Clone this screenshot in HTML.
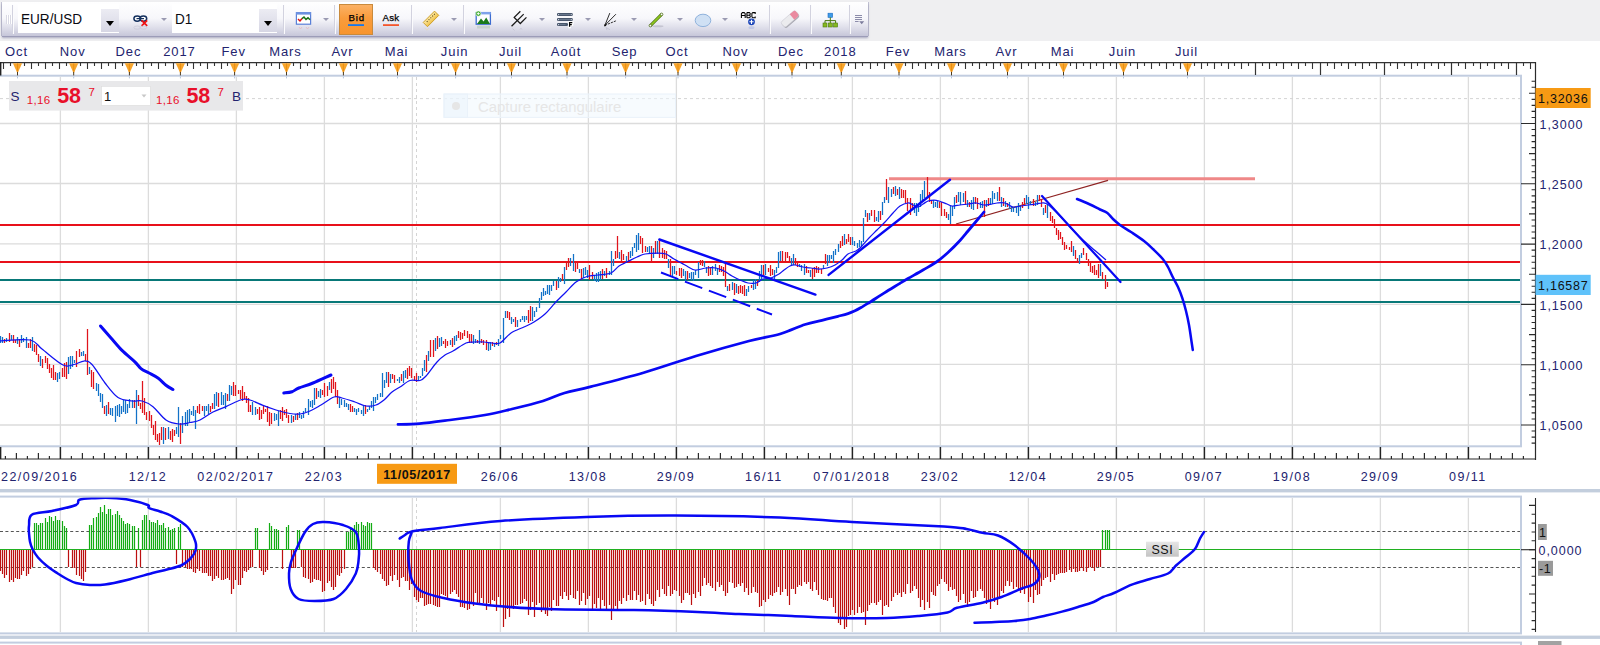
<!DOCTYPE html>
<html><head><meta charset="utf-8"><title>EUR/USD D1</title>
<style>
html,body{margin:0;padding:0;}
body{width:1600px;height:645px;overflow:hidden;background:#fff;position:relative;font-family:"Liberation Sans",sans-serif;}
#top{position:absolute;left:0;top:0;width:1600px;height:41px;background:#efeff1;}
#chart{position:absolute;left:0;top:0;width:1600px;height:645px;font-family:"Liberation Sans",sans-serif;}
#tb{position:absolute;left:2px;top:2px;width:866px;height:34px;background:linear-gradient(#ffffff 0%,#f7f7fb 48%,#dadae7 80%,#c6c6d9 100%);box-shadow:0 1px 0 #9c9cb8,0 2px 2px rgba(110,110,150,.55),-1px 0 0 #c4c4d4,1px 0 0 #c4c4d4;}
#tb .sep{position:absolute;top:3px;height:29px;width:1px;background:#d2d2df;border-right:1px solid #fbfbfd;}
#tb .combo{position:absolute;top:2px;height:29px;background:#fff;}
#tb .combo span{position:absolute;left:3.3px;top:5.6px;font-size:15px;line-height:17px;color:#0a0a12;transform:scaleX(.905);transform-origin:0 0;white-space:nowrap;}
#tb .dd{position:absolute;right:0;top:5px;width:18px;height:23px;background:linear-gradient(#ececf3,#d6d6e4);}
#tb .dd:after{content:"";position:absolute;left:4.5px;top:12px;border:4.6px solid transparent;border-top:5.4px solid #000;border-bottom:0;}
#tb .ar{position:absolute;top:16px;width:0;height:0;border:3px solid transparent;border-top:3.4px solid #9a9ab2;border-bottom:0;}
#tb svg{position:absolute;left:0;top:0;}

</style></head><body>
<div id="top"></div>

<div id="tb">
<div style="position:absolute;left:3.6px;top:12.6px;width:6px;height:9.4px;background:repeating-linear-gradient(90deg,#d9d9e4 0 1px,#ffffff 1px 2px);"></div>
<div class="sep" style="left:10px"></div>
<div class="combo" style="left:16px;width:101px"><span>EUR/USD</span><div class="dd"></div></div>
<div class="ar" style="left:158.5px"></div>
<div class="combo" style="left:170px;width:105px"><span>D1</span><div class="dd"></div></div>
<div class="sep" style="left:281px"></div>
<div class="ar" style="left:321px"></div>
<div class="sep" style="left:332px"></div>
<div style="position:absolute;left:337px;top:2px;width:31.5px;height:29px;background:linear-gradient(#fbb165,#f99c3c 45%,#f8952e);border:1px solid #c98a3c;"></div>
<div class="sep" style="left:409px"></div>
<div class="ar" style="left:449px"></div>
<div class="sep" style="left:461px"></div>
<div class="ar" style="left:536.5px"></div>
<div class="ar" style="left:582.5px"></div>
<div class="ar" style="left:628.5px"></div>
<div class="ar" style="left:674.5px"></div>
<div class="ar" style="left:720px"></div>
<div class="sep" style="left:767px"></div>
<div class="sep" style="left:808px"></div>
<div class="sep" style="left:846.5px"></div>
<svg width="866" height="34" viewBox="2 2 866 34">
<!-- link icon -->
<g fill="#fff" stroke="#14305e" stroke-width="1.5"><ellipse cx="137.2" cy="18.6" rx="3.3" ry="2.6"/><ellipse cx="143.4" cy="18.6" rx="3.3" ry="2.6"/></g><path d="M136.5 18.6h7.5" stroke="#14305e" stroke-width="1.2"/>
<path d="M141.6 20.4l5.6 5.4M147.2 20.4l-5.6 5.4" stroke="#f01010" stroke-width="1.7"/><g fill="none" stroke="#c4c4d4" stroke-width="1" opacity=".6"><ellipse cx="137.2" cy="27.6" rx="3.3" ry="1.6"/><ellipse cx="143.4" cy="27.6" rx="3.3" ry="1.6"/></g>
<!-- chart type icon -->
<rect x="296.4" y="12.6" width="14.2" height="11.6" fill="#fff" stroke="#5a80d8" stroke-width="1.2"/>
<rect x="296" y="12" width="15" height="2.6" fill="#6c90e0"/>
<path d="M298 19l2 2 2-2.4" stroke="#e01010" stroke-width="1.5" fill="none"/><path d="M302 18.6l2 -1.6 2 2.4 2-1.6 2 2" stroke="#187018" stroke-width="1.5" fill="none"/>
<path d="M299 27l1.5 2 1.5-2M306 27l1.5 2 1.5-2" stroke="#e6b0b8" stroke-width="1" fill="none" opacity=".6"/>
<!-- Bid / Ask -->
<g font-family="Liberation Sans,sans-serif" font-size="9.7" fill="#000" stroke="#000" stroke-width="0.25"><text x="348.6" y="21" letter-spacing="0.75">Bid</text><text x="382.6" y="21" letter-spacing="0.15">Ask</text></g>
<rect x="348" y="24.2" width="16" height="1.8" fill="#1478ee"/>
<rect x="383" y="24.2" width="16" height="1.8" fill="#f4562c"/>
<!-- ruler -->
<defs><linearGradient id="gr" x1="0" y1="0" x2="0" y2="1"><stop offset="0" stop-color="#fdeaa6"/><stop offset="1" stop-color="#f0c248"/></linearGradient></defs><g transform="rotate(-45 431 18.9)"><rect x="423" y="15.9" width="16" height="6" fill="url(#gr)" stroke="#cc9c28" stroke-width="0.9"/><path d="M426 18h0.9M428.6 18h0.9M431.2 18h0.9M433.8 18h0.9M436.2 18h0.9" stroke="#4a3808" stroke-width="1"/></g><path d="M424.5 27.8l2.4 2.4 2.2-2.2" stroke="#e8d4a0" stroke-width="0.9" fill="none" opacity=".6"/>
<!-- image icon -->
<rect x="476.2" y="12.6" width="14.2" height="11.6" fill="#fdfdff" stroke="#3c6cd0" stroke-width="1.3"/>
<rect x="476" y="12" width="14.8" height="2.4" fill="#7ea2ea"/>
<path d="M477 24l4-5.5 2.6 3 2.6-4 3.8 6.5z" fill="#1a7a1a"/>
<circle cx="478.3" cy="13.6" r="2.7" fill="#3aa828" stroke="#fff" stroke-width="0.6"/><path d="M476.8 13.6h3M478.3 12.1v3" stroke="#fff" stroke-width="0.9"/>
<rect x="477" y="25.5" width="13" height="3" fill="#9ab89a" opacity=".35"/>
<!-- pitchfork -->
<g stroke="#1a1a1a" stroke-width="1.25" fill="none" stroke-linecap="square"><path d="M512 25.8L523.2 14.6M514.2 17.4L520.3 23.5M514.2 17.4L519.9 11.7M520.3 23.5L526 17.8"/></g>
<path d="M512.5 28.5l2 2M520 29.5l1-1.2 1 1.2" stroke="#b8b8c8" stroke-width="0.8" fill="none" opacity=".7"/>
<!-- fib levels -->
<g fill="#48566c"><rect x="557" y="13" width="15.8" height="3.1" rx="1.3"/><rect x="557" y="18" width="15.8" height="3.1" rx="1.3"/><rect x="557" y="23" width="11" height="3.1" rx="1.3"/></g>
<g stroke="#8e9cb4" stroke-width="0.5"><path d="M559.5 14.55h10.8M559.5 19.55h10.8M559.5 24.55h6"/></g><g fill="#e8ecf4"><circle cx="558.6" cy="14.55" r=".6"/><circle cx="571.2" cy="14.55" r=".6"/><circle cx="558.6" cy="19.55" r=".6"/><circle cx="571.2" cy="19.55" r=".6"/><circle cx="558.6" cy="24.55" r=".6"/></g>
<path d="M569.6 26.8V22.7H572.3M569.6 24.7H571.8" stroke="#fff" stroke-width="2.8" fill="none" stroke-linecap="square"/><path d="M569.6 26.8V22.7H572.3M569.6 24.7H571.8" stroke="#000" stroke-width="1.25" fill="none"/>
<!-- fan -->
<g stroke="#222" stroke-width="0.95" fill="none"><path d="M604.9 25.3L609.8 13.1M604.9 25.3L615.9 14.2"/><path d="M604.9 25.3L616.8 20.5" stroke-dasharray="2.2 1"/></g><path d="M606 27.5l4 2.2M606 27.5l1 2.6" stroke="#b0b0c0" stroke-width="0.8" opacity=".6"/>
<path d="M604 24.5l2.4 .4-1.6 1.8z" fill="#000"/>
<!-- green line -->
<path d="M650.4 25.6L661.6 14.4" stroke="#4e7210" stroke-width="3"/><path d="M650.4 25.6L661.6 14.4" stroke="#8ec820" stroke-width="1.7"/><circle cx="650.4" cy="25.6" r="1.3" fill="#fff" stroke="#4a6a10" stroke-width="0.8"/><circle cx="661.6" cy="14.4" r="1.3" fill="#fff" stroke="#4a6a10" stroke-width="0.8"/><ellipse cx="658" cy="26.2" rx="5.5" ry="1" fill="#a8a8b8" opacity=".5"/>
<!-- ellipse -->
<ellipse cx="703" cy="20.4" rx="7.8" ry="6.2" fill="#cfe0f4" stroke="#8fb2dc" stroke-width="1"/>
<!-- ABC -->
<path d="M741.4 17.9V13.6L742.4 12.6H744.2L745.2 13.6V17.9M741.4 15.5H745.2M746.9 12.6V17.8M746.9 12.6H749.4L750.2 13.4V14.4L749.4 15.2H746.9M749.4 15.2L750.2 16V17L749.4 17.8H746.9M755.2 14V12.6H752.8L751.9 13.5V16.9L752.8 17.8H755.2V16.6" stroke="#000" stroke-width="1.05" fill="none"/>
<circle cx="751.5" cy="21.8" r="3.4" fill="#1a44b8"/><path d="M749.4 21.8h4.2M751.5 19.7v4.2" stroke="#fff" stroke-width="1.1"/><ellipse cx="751.5" cy="27.6" rx="3" ry="1.5" fill="#8ea4e0" opacity=".35"/>
<!-- eraser -->
<g transform="rotate(-41 790 19.2)"><rect x="780.6" y="16.6" width="19" height="7" rx="2.2" fill="#a9a9b2"/><rect x="780.6" y="15.4" width="19" height="7" rx="2.2" fill="#ebebee" stroke="#c4c4cc" stroke-width="0.5"/><path d="M793 15.4h4.4a2.2 2.2 0 0 1 2.2 2.2v2.6a2.2 2.2 0 0 1-2.2 2.2H793z" fill="#ea8aa0"/></g>
<!-- org chart -->
<rect x="828" y="13.2" width="4.6" height="4.2" fill="#3e9ae8" stroke="#1c6cc0" stroke-width="0.6"/>
<path d="M830.3 17.4v3.2M825 23v-2.4h10.6V23M830.3 20.6V23" stroke="#4a7a10" stroke-width="1" fill="none"/>
<g fill="#86b820" stroke="#4a7a10" stroke-width="0.6"><rect x="823" y="23" width="4" height="4"/><rect x="828.3" y="23" width="4" height="4"/><rect x="833.6" y="23" width="4" height="4"/></g>
<!-- overflow -->
<path d="M855 15.5h7M855 17.5h7M855 19.5h7M855 21.5h3.6" stroke="#8c8caa" stroke-width="1"/><path d="M859.2 21.2h5l-2.5 3.1z" fill="#7c7c9c"/>
</svg>
</div>

<svg id="chart" width="1600" height="645" viewBox="0 0 1600 645">
<g stroke="#dcdcdc" stroke-width="1.3" fill="none">
<path d="M60.4 77V445M148.4 77V445M236.4 77V445M324.4 77V445M412.4 77V445M500.4 77V445M588.4 77V445M676.4 77V445M764.4 77V445M852.4 77V445M940.4 77V445M1028.4 77V445M1116.4 77V445M1204.4 77V445M1292.4 77V445M1380.4 77V445M1468.4 77V445M0 123.5H1520M0 183.5H1520M0 243.8H1520M0 304.3H1520M0 364.4H1520M0 425H1520M60.4 498V632M148.4 498V632M236.4 498V632M324.4 498V632M412.4 498V632M500.4 498V632M588.4 498V632M676.4 498V632M764.4 498V632M852.4 498V632M940.4 498V632M1028.4 498V632M1116.4 498V632M1204.4 498V632M1292.4 498V632M1380.4 498V632M1468.4 498V632"/>
</g>
<path d="M0 98.6H1520" stroke="#d4d4d4" stroke-width="1" stroke-dasharray="3 3" fill="none"/>
<path d="M416.5 77V445M416.5 498V632" stroke="#d4d4d4" stroke-width="1" stroke-dasharray="3 3" fill="none"/>
<rect x="444" y="94" width="231.5" height="23.4" fill="#f0f7fd" fill-opacity=".55" stroke="#eaf2fa" stroke-width="1"/>
<rect x="444" y="94" width="23.5" height="23.4" fill="#eaf3fc" fill-opacity=".5" stroke="#eaf2fa" stroke-width="1"/>
<circle cx="456" cy="106" r="4" fill="#e6e6e6"/>
<text x="478" y="111.5" font-size="14.9" fill="#e6e6e6">Capture rectangulaire</text>
<path d="M0 225H1520M0 262H1520" stroke="#e8101a" stroke-width="2" fill="none"/>
<path d="M0 280H1520M0 302H1520" stroke="#087878" stroke-width="2.2" fill="none"/>
<path d="M889 178.7H1255" stroke="#ef8888" stroke-width="3" fill="none"/>
<path d="M956 224L1108 180.3" stroke="#8e2222" stroke-width="1.2" fill="none"/>
<path d="M4.5 339V343M9.5 333V342M13.5 335V343M15.5 340V343M19.5 339V347M28.5 343V348M30.5 339V348M34.5 344V352M36.5 345V355M38.5 354V362M42.5 359V368M45.5 356V363M47.5 358V369M49.5 364V373M51.5 368V378M53.5 365V380M55.5 372V380M62.5 368V377M64.5 363V377M66.5 362V379M76.5 351V367M79.5 349V357M85.5 354V361M87.5 329V375M91.5 370V387M93.5 372V389M104.5 406V414M108.5 402V414M134.5 400V408M138.5 395V406M140.5 403V409M142.5 381V413M144.5 398V415M146.5 412V420M149.5 411V421M151.5 415V428M153.5 425V435M155.5 421V440M157.5 434V442M159.5 433V445M161.5 427V440M165.5 428V440M170.5 431V440M172.5 429V442M174.5 430V436M180.5 423V444M197.5 406V413M199.5 404V414M202.5 406V411M210.5 406V412M212.5 403V409M218.5 393V407M227.5 394V401M233.5 382V396M235.5 385V396M238.5 390V394M240.5 390V399M242.5 386V401M244.5 392V399M246.5 396V403M248.5 398V412M250.5 405V412M257.5 409V414M259.5 407V420M261.5 410V419M263.5 406V414M265.5 409V412M267.5 406V422M269.5 412V426M271.5 413V424M280.5 410V419M282.5 407V421M284.5 410V415M286.5 409V418M288.5 415V423M293.5 416V422M297.5 413V420M316.5 388V399M322.5 390V395M324.5 383V397M327.5 386V396M331.5 379V393M333.5 377V389M335.5 382V397M337.5 390V404M350.5 404V412M352.5 406V412M365.5 405V414M388.5 372V387M392.5 374V379M394.5 375V383M401.5 374V381M407.5 368V379M409.5 366V376M411.5 368V378M414.5 376V381M416.5 373V382M426.5 355V372M430.5 340V357M433.5 340V357M437.5 336V349M443.5 341V344M445.5 339V348M447.5 341V346M452.5 338V347M458.5 331V338M460.5 332V340M462.5 333V339M464.5 330V336M467.5 331V338M469.5 334V343M471.5 334V343M477.5 340V343M481.5 339V343M483.5 340V345M486.5 340V350M492.5 342V346M496.5 342V345M507.5 311V318M509.5 312V320M515.5 317V327M528.5 310V323M530.5 306V321M556.5 281V290M562.5 274V281M566.5 261V270M568.5 258V267M575.5 261V272M577.5 261V269M581.5 269V280M589.5 265V280M592.5 272V279M602.5 269V279M606.5 268V278M615.5 251V259M617.5 236V258M621.5 250V263M623.5 254V260M628.5 252V261M640.5 236V244M642.5 238V253M645.5 246V252M651.5 246V263M655.5 241V254M659.5 240V258M662.5 248V258M664.5 250V259M666.5 251V259M670.5 259V276M676.5 271V275M679.5 268V276M681.5 268V278M687.5 271V280M700.5 260V265M702.5 260V266M708.5 266V276M710.5 267V275M719.5 265V272M721.5 266V272M723.5 267V276M725.5 263V287M729.5 284V291M734.5 283V295M738.5 286V294M740.5 285V293M742.5 286V294M744.5 285V296M751.5 285V288M757.5 280V286M763.5 265V275M768.5 268V272M770.5 265V276M772.5 269V275M782.5 251V262M785.5 252V263M787.5 252V258M789.5 256V262M795.5 258V265M797.5 263V267M806.5 266V273M808.5 270V273M812.5 268V279M814.5 267V277M816.5 266V273M818.5 267V273M821.5 269V274M825.5 254V264M840.5 241V248M842.5 236V246M846.5 239V244M848.5 234V242M850.5 237V245M867.5 213V222M871.5 210V216M874.5 210V222M880.5 211V220M886.5 179V200M893.5 187V194M897.5 189V195M901.5 189V198M903.5 190V198M905.5 190V203M907.5 198V211M910.5 198V215M912.5 203V210M927.5 177V198M929.5 192V202M931.5 200V204M939.5 202V208M941.5 202V216M944.5 209V216M946.5 212V218M956.5 195V203M965.5 191V205M969.5 202V207M975.5 197V204M977.5 198V209M984.5 200V217M988.5 198V206M999.5 187V201M1003.5 198V206M1007.5 203V207M1022.5 202V208M1024.5 198V206M1033.5 199V206M1039.5 195V201M1041.5 199V207M1045.5 205V213M1050.5 212V221M1052.5 216V223M1054.5 219V228M1056.5 228V235M1058.5 230V240M1060.5 232V239M1062.5 237V245M1064.5 242V250M1066.5 245V249M1069.5 247V250M1071.5 241V252M1075.5 250V259M1077.5 258V262M1083.5 248V255M1086.5 253V260M1088.5 259V266M1090.5 262V272M1092.5 266V273M1094.5 265V275M1096.5 270V275M1098.5 264V278M1102.5 272V279M1105.5 275V289M1107.5 282V287" stroke="#e0141c" stroke-width="1.25" fill="none"/>
<path d="M0.5 336V343M2.5 337V343M6.5 338V342M11.5 335V340M17.5 337V344M21.5 335V343M23.5 338V342M26.5 337V348M32.5 337V351M40.5 356V366M57.5 373V382M59.5 372V379M68.5 357V374M70.5 356V369M72.5 356V367M74.5 360V363M81.5 352V356M83.5 351V356M89.5 367V374M96.5 383V391M98.5 384V396M100.5 393V402M102.5 394V408M106.5 405V416M110.5 408V415M112.5 408V416M115.5 406V422M117.5 405V416M119.5 404V417M121.5 406V414M123.5 400V412M125.5 400V414M127.5 404V413M129.5 399V408M132.5 400V408M136.5 390V424M163.5 427V444M168.5 427V439M176.5 427V434M178.5 407V437M182.5 416V433M185.5 412V426M187.5 410V426M189.5 409V423M191.5 411V415M193.5 406V416M195.5 410V429M204.5 406V416M206.5 406V411M208.5 404V414M214.5 394V409M216.5 392V406M221.5 392V405M223.5 395V405M225.5 393V409M229.5 385V401M231.5 386V395M252.5 402V415M255.5 407V415M274.5 413V421M276.5 414V420M278.5 411V426M291.5 415V423M295.5 414V420M299.5 412V418M301.5 415V419M303.5 411V418M305.5 408V412M308.5 399V415M310.5 401V407M312.5 400V408M314.5 388V405M318.5 391V397M320.5 389V398M329.5 382V390M339.5 397V408M341.5 399V405M344.5 400V407M346.5 403V407M348.5 404V410M354.5 408V412M356.5 409V415M358.5 408V412M361.5 410V414M363.5 406V416M367.5 409V412M369.5 406V410M371.5 401V408M373.5 397V411M375.5 397V403M377.5 394V400M380.5 393V397M382.5 373V397M384.5 380V388M386.5 372V383M390.5 374V383M397.5 379V381M399.5 377V383M403.5 371V383M405.5 370V378M418.5 376V380M420.5 376V378M422.5 368V376M424.5 360V371M428.5 351V361M435.5 338V351M439.5 338V347M441.5 337V346M450.5 340V345M454.5 336V345M456.5 335V341M473.5 335V344M475.5 339V343M479.5 330V344M488.5 343V351M490.5 342V350M494.5 343V347M498.5 339V346M500.5 335V339M503.5 318V343M505.5 311V318M511.5 317V324M513.5 319V322M517.5 320V327M520.5 319V322M522.5 316V320M524.5 316V322M526.5 316V320M532.5 307V321M534.5 311V317M536.5 307V312M539.5 298V308M541.5 292V300M543.5 288V296M545.5 291V295M547.5 285V294M549.5 285V295M551.5 285V291M553.5 281V286M558.5 277V288M560.5 278V282M564.5 267V284M570.5 258V266M573.5 254V271M579.5 269V273M583.5 268V278M585.5 267V275M587.5 270V278M594.5 275V281M596.5 273V282M598.5 272V282M600.5 271V280M604.5 271V276M609.5 271V275M611.5 251V275M613.5 259V266M619.5 252V259M626.5 256V262M630.5 251V258M632.5 247V256M634.5 243V248M636.5 235V252M638.5 233V250M647.5 247V252M649.5 246V254M653.5 248V258M657.5 241V254M668.5 259V268M672.5 266V276M674.5 266V274M683.5 269V276M685.5 271V281M689.5 273V278M691.5 272V280M693.5 272V281M695.5 270V275M698.5 262V278M704.5 261V267M706.5 267V273M712.5 266V275M715.5 264V271M717.5 268V275M727.5 286V291M732.5 282V290M736.5 284V293M746.5 289V296M748.5 286V292M753.5 280V290M755.5 279V289M759.5 271V282M761.5 265V280M765.5 264V275M774.5 270V279M776.5 267V273M778.5 252V268M780.5 251V261M791.5 258V265M793.5 254V265M799.5 264V267M801.5 265V271M804.5 264V275M810.5 270V277M823.5 265V269M827.5 255V266M829.5 255V263M831.5 255V259M833.5 251V263M835.5 249V255M838.5 244V252M844.5 234V245M852.5 237V245M854.5 241V246M857.5 243V248M859.5 240V247M861.5 241V246M863.5 218V242M865.5 210V217M869.5 213V220M876.5 217V221M878.5 211V222M882.5 202V215M884.5 197V203M888.5 187V203M891.5 189V197M895.5 186V196M899.5 187V199M914.5 203V213M916.5 203V216M918.5 204V212M920.5 194V207M922.5 190V201M924.5 181V198M933.5 200V208M935.5 202V207M937.5 201V208M948.5 214V220M950.5 205V224M952.5 206V216M954.5 197V209M958.5 192V202M960.5 192V205M963.5 193V202M967.5 200V207M971.5 200V209M973.5 197V210M980.5 202V208M982.5 201V208M986.5 200V207M990.5 198V205M992.5 191V204M994.5 193V199M997.5 192V201M1001.5 197V207M1005.5 201V207M1009.5 202V209M1011.5 206V212M1013.5 207V212M1016.5 206V213M1018.5 203V216M1020.5 206V211M1026.5 195V204M1028.5 197V209M1030.5 201V205M1035.5 202V206M1037.5 195V205M1043.5 208V215M1047.5 204V218M1073.5 246V256M1079.5 255V264M1081.5 253V258M1100.5 264V276" stroke="#1272c8" stroke-width="1.25" fill="none"/>
<path d="M0 340.8C5 340.7 23 338.6 30 340C37 341.4 36.5 344.8 42 349C47.5 353.2 57.7 362.4 63 365C68.3 367.6 70.5 365.2 74 364.5C77.5 363.8 81 361 84 361C87 361 88.5 360.8 92 364.5C95.5 368.2 100.7 377.5 105 383C109.3 388.5 113.5 394.5 118 397.5C122.5 400.5 128 400.4 132 401C136 401.6 138.5 400.1 142 401C145.5 401.9 149 403.5 153 406.7C157 409.9 161.7 417.1 166 420C170.3 422.9 175 423.6 179 424C183 424.4 186.5 423.2 190 422.5C193.5 421.8 196.2 421.8 200 420C203.8 418.2 208.7 414.2 213 412C217.3 409.8 221.2 408.7 226 406.6C230.8 404.5 238 400.6 242 399.5C246 398.4 246.5 399 250 400C253.5 401 258.7 403.7 263 405.4C267.3 407.1 271.5 408.6 276 410C280.5 411.4 286 412.8 290 413.5C294 414.2 296.7 414.4 300 414C303.3 413.6 306.5 412.5 310 411C313.5 409.5 317 407.3 321 405C325 402.7 330.5 398.2 334 397C337.5 395.8 338.5 397.2 342 398C345.5 398.8 351 400.7 355 402C359 403.3 362.5 405.5 366 406C369.5 406.5 373 406 376 405C379 404 381.3 402.2 384 400C386.7 397.8 389.3 394.2 392 392C394.7 389.8 397 388.9 400 387C403 385.1 406.7 381.6 410 380.5C413.3 379.4 417.3 381.2 420 380.5C422.7 379.8 423.2 379.1 426 376C428.8 372.9 433.8 365.5 437 362C440.2 358.5 442.3 356.8 445 355C447.7 353.2 449.5 353 453 351C456.5 349 462.5 344.5 466 343C469.5 341.5 471 342.2 474 342C477 341.8 481 341.8 484 342C487 342.2 489.3 342.8 492 343C494.7 343.2 496.8 344.7 500 343C503.2 341.3 507 335.7 511 333C515 330.3 520.2 328.8 524 327C527.8 325.2 530.5 324.2 534 322C537.5 319.8 541.5 317.2 545 314C548.5 310.8 551.5 306.7 555 303C558.5 299.3 562.5 295.5 566 292C569.5 288.5 572.5 284.6 576 282C579.5 279.4 583.3 277.7 587 276.5C590.7 275.3 594 275.6 598 275C602 274.4 607.5 274.5 611 273C614.5 271.5 616.3 267.8 619 266C621.7 264.2 624 263.5 627 262C630 260.5 634 258.3 637 257C640 255.7 641.5 254.7 645 254C648.5 253.3 654.5 253 658 253C661.5 253 663.3 253 666 254C668.7 255 670.8 257.2 674 259C677.2 260.8 681.5 263.2 685 265C688.5 266.8 691.5 269.5 695 270C698.5 270.5 702.5 268.3 706 268C709.5 267.7 713 267.5 716 268C719 268.5 721.3 269.7 724 271C726.7 272.3 729.3 274.5 732 276C734.7 277.5 737.3 278.8 740 280C742.7 281.2 745.3 282.5 748 283C750.7 283.5 753.5 283.7 756 283C758.5 282.3 760.5 279.8 763 279C765.5 278.2 768.3 278.8 771 278C773.7 277.2 776.8 275.3 779 274C781.2 272.7 782.2 271.3 784 270C785.8 268.7 788.2 266.8 790 266C791.8 265.2 792.8 264.8 795 265C797.2 265.2 800.3 266.5 803 267C805.7 267.5 808.3 267.7 811 268C813.7 268.3 816.3 269 819 269C821.7 269 824.3 268.7 827 268C829.7 267.3 832.5 266.3 835 265C837.5 263.7 839.8 261.8 842 260C844.2 258.2 845.7 255.5 848 254C850.3 252.5 853.8 252.2 856 251C858.2 249.8 858.8 249.2 861 247C863.2 244.8 866.3 240.8 869 238C871.7 235.2 874.3 232.7 877 230C879.7 227.3 882.3 224.8 885 222C887.7 219.2 890.5 215.7 893 213C895.5 210.3 897.5 207.7 900 206C902.5 204.3 905.8 203.2 908 203C910.2 202.8 911.3 204.3 913 205C914.7 205.7 916.3 207.2 918 207C919.7 206.8 921.3 205 923 204C924.7 203 926.2 201.7 928 201C929.8 200.3 932.2 200 934 200C935.8 200 936.8 200.3 939 201C941.2 201.7 944.8 203.2 947 204C949.2 204.8 949.8 205.8 952 206C954.2 206.2 957.3 205.3 960 205C962.7 204.7 965.3 204.3 968 204C970.7 203.7 973.3 202.8 976 203C978.7 203.2 981.3 204.8 984 205C986.7 205.2 989.8 204.3 992 204C994.2 203.7 994.8 203.2 997 203C999.2 202.8 1002.3 202.3 1005 203C1007.7 203.7 1010.3 206.5 1013 207C1015.7 207.5 1018.5 206.3 1021 206C1023.5 205.7 1025.5 205.3 1028 205C1030.5 204.7 1033.7 204.3 1036 204C1038.3 203.7 1040.3 203.1 1042 203C1043.7 202.9 1044.3 202.7 1046 203.5C1047.7 204.3 1049.7 205.9 1052 208C1054.3 210.1 1057 212.8 1060 216C1063 219.2 1066.2 223 1070 227C1073.8 231 1078.8 236.1 1083 240C1087.2 243.9 1091.2 247.2 1095 250.5C1098.8 253.8 1104.2 258.4 1106 260" stroke="#1212f2" stroke-width="1.25" fill="none"/>
<path d="M0 531.5H1520M0 567.5H1520" stroke="#555" stroke-width="1" stroke-dasharray="3 2.4" fill="none"/>
<path d="M0.5 549.5V571M2.5 549.5V574M4.5 549.5V578M6.5 549.5V575M9.5 549.5V582M11.5 549.5V580M13.5 549.5V582M15.5 549.5V578M17.5 549.5V579M19.5 549.5V579M21.5 549.5V575M23.5 549.5V571M26.5 549.5V576M28.5 549.5V574M30.5 549.5V569M32.5 549.5V567M68.5 549.5V567M72.5 549.5V568M74.5 549.5V568M76.5 549.5V575M79.5 549.5V576M81.5 549.5V579M83.5 549.5V581M85.5 549.5V572M136.5 549.5V567M140.5 549.5V567M176.5 549.5V564M182.5 549.5V567M185.5 549.5V567M187.5 549.5V569M189.5 549.5V569M191.5 549.5V569M193.5 549.5V572M195.5 549.5V573M197.5 549.5V569M199.5 549.5V571M202.5 549.5V573M204.5 549.5V573M206.5 549.5V573M208.5 549.5V576M210.5 549.5V576M212.5 549.5V581M214.5 549.5V579M216.5 549.5V576M218.5 549.5V578M221.5 549.5V580M223.5 549.5V580M225.5 549.5V579M227.5 549.5V578M229.5 549.5V580M231.5 549.5V594M233.5 549.5V589M235.5 549.5V580M238.5 549.5V585M240.5 549.5V585M242.5 549.5V578M244.5 549.5V571M246.5 549.5V572M248.5 549.5V570M250.5 549.5V567M252.5 549.5V567M259.5 549.5V568M261.5 549.5V571M263.5 549.5V575M265.5 549.5V572M267.5 549.5V570M282.5 549.5V569M291.5 549.5V568M293.5 549.5V568M295.5 549.5V568M301.5 549.5V567M303.5 549.5V577M305.5 549.5V578M308.5 549.5V579M310.5 549.5V583M312.5 549.5V582M314.5 549.5V579M316.5 549.5V580M318.5 549.5V580M320.5 549.5V581M322.5 549.5V592M324.5 549.5V591M327.5 549.5V583M329.5 549.5V581M331.5 549.5V587M333.5 549.5V590M335.5 549.5V587M337.5 549.5V575M339.5 549.5V576M341.5 549.5V573M344.5 549.5V569M373.5 549.5V568M375.5 549.5V570M377.5 549.5V572M380.5 549.5V574M382.5 549.5V579M384.5 549.5V581M386.5 549.5V586M388.5 549.5V585M390.5 549.5V576M392.5 549.5V581M394.5 549.5V575M397.5 549.5V580M399.5 549.5V587M401.5 549.5V578M403.5 549.5V577M405.5 549.5V581M407.5 549.5V581M409.5 549.5V590M411.5 549.5V584M414.5 549.5V597M416.5 549.5V600M418.5 549.5V602M420.5 549.5V598M422.5 549.5V598M424.5 549.5V606M426.5 549.5V605M428.5 549.5V604M430.5 549.5V604M433.5 549.5V605M435.5 549.5V606M437.5 549.5V607M439.5 549.5V607M441.5 549.5V594M443.5 549.5V595M445.5 549.5V596M447.5 549.5V598M450.5 549.5V594M452.5 549.5V592M454.5 549.5V590M456.5 549.5V594M458.5 549.5V597M460.5 549.5V607M462.5 549.5V607M464.5 549.5V608M467.5 549.5V610M469.5 549.5V609M471.5 549.5V603M473.5 549.5V606M475.5 549.5V593M477.5 549.5V604M479.5 549.5V603M481.5 549.5V598M483.5 549.5V603M486.5 549.5V610M488.5 549.5V603M490.5 549.5V606M492.5 549.5V600M494.5 549.5V601M496.5 549.5V611M498.5 549.5V597M500.5 549.5V605M503.5 549.5V627M505.5 549.5V619M507.5 549.5V609M509.5 549.5V617M511.5 549.5V607M513.5 549.5V609M515.5 549.5V605M517.5 549.5V605M520.5 549.5V604M522.5 549.5V603M524.5 549.5V599M526.5 549.5V601M528.5 549.5V615M530.5 549.5V610M532.5 549.5V602M534.5 549.5V617M536.5 549.5V605M539.5 549.5V603M541.5 549.5V612M543.5 549.5V608M545.5 549.5V614M547.5 549.5V616M549.5 549.5V607M551.5 549.5V611M553.5 549.5V600M556.5 549.5V606M558.5 549.5V606M560.5 549.5V596M562.5 549.5V599M564.5 549.5V592M566.5 549.5V596M568.5 549.5V600M570.5 549.5V595M573.5 549.5V598M575.5 549.5V599M577.5 549.5V591M579.5 549.5V605M581.5 549.5V601M583.5 549.5V593M585.5 549.5V605M587.5 549.5V599M589.5 549.5V596M592.5 549.5V610M594.5 549.5V604M596.5 549.5V608M598.5 549.5V598M600.5 549.5V611M602.5 549.5V600M604.5 549.5V606M606.5 549.5V611M609.5 549.5V605M611.5 549.5V620M613.5 549.5V609M615.5 549.5V606M617.5 549.5V610M619.5 549.5V601M621.5 549.5V604M623.5 549.5V598M626.5 549.5V601M628.5 549.5V595M630.5 549.5V600M632.5 549.5V600M634.5 549.5V591M636.5 549.5V600M638.5 549.5V595M640.5 549.5V602M642.5 549.5V601M645.5 549.5V605M647.5 549.5V594M649.5 549.5V599M651.5 549.5V604M653.5 549.5V606M655.5 549.5V601M657.5 549.5V590M659.5 549.5V597M662.5 549.5V589M664.5 549.5V594M666.5 549.5V596M668.5 549.5V586M670.5 549.5V596M672.5 549.5V594M674.5 549.5V590M676.5 549.5V591M679.5 549.5V596M681.5 549.5V603M683.5 549.5V600M685.5 549.5V593M687.5 549.5V593M689.5 549.5V595M691.5 549.5V605M693.5 549.5V594M695.5 549.5V598M698.5 549.5V592M700.5 549.5V596M702.5 549.5V586M704.5 549.5V578M706.5 549.5V585M708.5 549.5V583M710.5 549.5V586M712.5 549.5V588M715.5 549.5V591M717.5 549.5V582M719.5 549.5V587M721.5 549.5V585M723.5 549.5V591M725.5 549.5V596M727.5 549.5V593M729.5 549.5V582M732.5 549.5V583M734.5 549.5V588M736.5 549.5V587M738.5 549.5V584M740.5 549.5V586M742.5 549.5V583M744.5 549.5V592M746.5 549.5V588M748.5 549.5V595M751.5 549.5V593M753.5 549.5V587M755.5 549.5V592M757.5 549.5V593M759.5 549.5V607M761.5 549.5V606M763.5 549.5V600M765.5 549.5V602M768.5 549.5V599M770.5 549.5V595M772.5 549.5V596M774.5 549.5V593M776.5 549.5V592M778.5 549.5V587M780.5 549.5V595M782.5 549.5V592M785.5 549.5V589M787.5 549.5V596M789.5 549.5V605M791.5 549.5V589M793.5 549.5V589M795.5 549.5V594M797.5 549.5V587M799.5 549.5V585M801.5 549.5V586M804.5 549.5V582M806.5 549.5V584M808.5 549.5V582M810.5 549.5V589M812.5 549.5V591M814.5 549.5V582M816.5 549.5V590M818.5 549.5V595M821.5 549.5V599M823.5 549.5V600M825.5 549.5V600M827.5 549.5V601M829.5 549.5V598M831.5 549.5V598M833.5 549.5V607M835.5 549.5V613M838.5 549.5V623M840.5 549.5V625M842.5 549.5V617M844.5 549.5V629M846.5 549.5V627M848.5 549.5V616M850.5 549.5V615M852.5 549.5V610M854.5 549.5V615M857.5 549.5V613M859.5 549.5V607M861.5 549.5V613M863.5 549.5V612M865.5 549.5V625M867.5 549.5V611M869.5 549.5V605M871.5 549.5V603M874.5 549.5V603M876.5 549.5V605M878.5 549.5V602M880.5 549.5V600M882.5 549.5V615M884.5 549.5V606M886.5 549.5V605M888.5 549.5V607M891.5 549.5V601M893.5 549.5V597M895.5 549.5V593M897.5 549.5V595M899.5 549.5V593M901.5 549.5V597M903.5 549.5V592M905.5 549.5V594M907.5 549.5V584M910.5 549.5V593M912.5 549.5V591M914.5 549.5V586M916.5 549.5V589M918.5 549.5V598M920.5 549.5V607M922.5 549.5V600M924.5 549.5V610M927.5 549.5V602M929.5 549.5V608M931.5 549.5V592M933.5 549.5V595M935.5 549.5V596M937.5 549.5V586M939.5 549.5V584M941.5 549.5V579M944.5 549.5V582M946.5 549.5V584M948.5 549.5V591M950.5 549.5V587M952.5 549.5V590M954.5 549.5V589M956.5 549.5V596M958.5 549.5V602M960.5 549.5V600M963.5 549.5V594M965.5 549.5V603M967.5 549.5V607M969.5 549.5V602M971.5 549.5V591M973.5 549.5V598M975.5 549.5V597M977.5 549.5V591M980.5 549.5V589M982.5 549.5V591M984.5 549.5V598M986.5 549.5V604M988.5 549.5V602M990.5 549.5V609M992.5 549.5V598M994.5 549.5V602M997.5 549.5V605M999.5 549.5V598M1001.5 549.5V591M1003.5 549.5V593M1005.5 549.5V586M1007.5 549.5V581M1009.5 549.5V586M1011.5 549.5V582M1013.5 549.5V589M1016.5 549.5V587M1018.5 549.5V590M1020.5 549.5V593M1022.5 549.5V590M1024.5 549.5V594M1026.5 549.5V588M1028.5 549.5V602M1030.5 549.5V597M1033.5 549.5V603M1035.5 549.5V590M1037.5 549.5V595M1039.5 549.5V594M1041.5 549.5V586M1043.5 549.5V580M1045.5 549.5V578M1047.5 549.5V577M1050.5 549.5V582M1052.5 549.5V574M1054.5 549.5V580M1056.5 549.5V575M1058.5 549.5V574M1060.5 549.5V573M1062.5 549.5V573M1064.5 549.5V573M1066.5 549.5V572M1069.5 549.5V570M1071.5 549.5V572M1073.5 549.5V569M1075.5 549.5V572M1077.5 549.5V572M1079.5 549.5V571M1081.5 549.5V568M1083.5 549.5V571M1086.5 549.5V572M1088.5 549.5V568M1090.5 549.5V567M1092.5 549.5V568M1094.5 549.5V571M1096.5 549.5V567M1098.5 549.5V567M1100.5 549.5V567" stroke="#bc1010" stroke-width="1.2" fill="none"/>
<path d="M34.5 549.5V523M36.5 549.5V523M38.5 549.5V525M40.5 549.5V523M42.5 549.5V523M45.5 549.5V518M47.5 549.5V522M49.5 549.5V516M51.5 549.5V517M53.5 549.5V521M55.5 549.5V516M57.5 549.5V520M59.5 549.5V520M62.5 549.5V521M64.5 549.5V526M66.5 549.5V528M89.5 549.5V525M91.5 549.5V525M93.5 549.5V518M96.5 549.5V517M98.5 549.5V513M100.5 549.5V507M102.5 549.5V512M104.5 549.5V505M106.5 549.5V514M108.5 549.5V509M110.5 549.5V509M112.5 549.5V515M115.5 549.5V514M117.5 549.5V511M119.5 549.5V515M121.5 549.5V518M123.5 549.5V521M125.5 549.5V524M127.5 549.5V523M129.5 549.5V524M132.5 549.5V526M134.5 549.5V526M138.5 549.5V528M142.5 549.5V520M144.5 549.5V515M146.5 549.5V515M149.5 549.5V520M151.5 549.5V522M153.5 549.5V522M155.5 549.5V523M157.5 549.5V520M159.5 549.5V525M161.5 549.5V525M163.5 549.5V523M165.5 549.5V528M168.5 549.5V527M170.5 549.5V530M172.5 549.5V529M174.5 549.5V528M178.5 549.5V527M180.5 549.5V524M255.5 549.5V528M257.5 549.5V528M269.5 549.5V523M271.5 549.5V526M274.5 549.5V529M276.5 549.5V529M278.5 549.5V530M286.5 549.5V527M288.5 549.5V525M297.5 549.5V530M299.5 549.5V530M346.5 549.5V532M348.5 549.5V532M350.5 549.5V528M352.5 549.5V529M354.5 549.5V525M356.5 549.5V522M358.5 549.5V524M361.5 549.5V522M363.5 549.5V525M365.5 549.5V526M367.5 549.5V522M369.5 549.5V523M371.5 549.5V523M1102.5 549.5V530M1105.5 549.5V530M1107.5 549.5V530M1109.5 549.5V530" stroke="#14ac14" stroke-width="1.2" fill="none"/>
<path d="M0 549.5H1520" stroke="#20b020" stroke-width="1.2" fill="none"/>
<g stroke="#0808f4" fill="none" stroke-linecap="round" stroke-linejoin="round">
<path d="M100.5 326C102.2 328 107.4 333.9 111 338C114.6 342.1 118.1 346.5 122 350.4C125.9 354.3 131.4 358.6 134.6 361.6C137.8 364.6 138.7 366.7 141 368.6C143.3 370.5 145.7 371.2 148.6 372.8C151.5 374.4 155.4 376.2 158.3 378.3C161.2 380.4 163.6 383.4 166 385.3C168.4 387.2 171.8 388.8 173 389.5" stroke-width="3"/>
<path d="M283.8 393C285.2 392.8 289.5 392.5 292 391.7C294.5 390.9 295.3 389.4 298.8 388C302.3 386.6 307.6 385.2 313 383C318.4 380.8 328 376.3 331 375" stroke-width="3"/>
<path d="M398 424.4C401.6 424.3 410.8 424.3 419.5 423.6C428.2 422.9 439.1 421.4 450 420C460.9 418.6 474.7 416.8 485 415C495.3 413.2 502.3 411.3 512 409C521.7 406.7 534.2 403.7 543 401C551.8 398.3 556.5 395.4 564.5 393C572.5 390.6 577.8 390.1 591 386.7C604.2 383.3 626 377.8 643.5 372.7C661 367.6 678.4 361.3 696 356C713.6 350.7 735 344.7 749 341C763 337.3 770.7 336.8 780 334C789.3 331.2 798 326.8 805 324.5C812 322.2 816.5 321.7 822 320.3C827.5 318.9 833.7 317.4 838 316.3C842.3 315.2 845.2 314.5 848 313.6C850.8 312.7 852.8 311.8 855 310.8C857.2 309.8 858.8 308.8 861 307.5C863.2 306.2 864.4 305.6 868.3 303.2C872.2 300.8 879.1 296.1 884.4 292.8C889.7 289.5 896.1 285.7 900 283.3C903.9 280.9 904.2 280.7 908 278.5C911.8 276.3 918.3 272.8 923 270C927.7 267.2 932.2 264.9 936.4 262C940.6 259.1 944.1 256.1 948 252.5C951.9 248.9 956.7 244.1 960 240.5C963.3 236.9 965.3 234.2 968 231C970.7 227.8 973.3 224.7 976 221.5C978.7 218.3 982.7 213.6 984 212" stroke-width="2.75"/>
<path d="M659.4 239.5L815.4 294.6" stroke-width="2.45"/>
<path d="M661 272.5L772 314.5" stroke-width="1.95" stroke-dasharray="18.5 7.1" stroke-linecap="butt"/>
<path d="M828.6 274.9L950 179.8" stroke-width="2.4"/>
<path d="M1042 196L1120.5 282" stroke-width="2.2"/>
<path d="M1077 199C1079.2 199.9 1086.2 202.8 1090 204.5C1093.8 206.2 1097.1 208.1 1100 209.5C1102.9 210.9 1105.2 211.4 1107.4 213C1109.6 214.6 1110.9 217 1113 219C1115.1 221 1117 222.8 1120 225C1123 227.2 1127 229.3 1131 232C1135 234.7 1140.3 238.2 1144 241C1147.7 243.8 1149.9 246 1153 249C1156.1 252 1160.3 256 1162.8 259C1165.3 262 1166.3 263.9 1168 267C1169.7 270.1 1171.3 274.2 1173 277.5C1174.7 280.8 1176.4 283.5 1178 287C1179.6 290.5 1181.2 294.6 1182.5 298.6C1183.8 302.6 1184.9 306.6 1186 311C1187.1 315.4 1188.2 320.5 1189 325C1189.8 329.5 1190.4 333.8 1191 338C1191.6 342.2 1192.5 348 1192.8 350" stroke-width="2.5"/>
<path d="M31.8 514.7C35.6 512.2 44.6 512.6 52 511C59.4 509.4 71.4 506.9 76 505C80.6 503.1 76.2 500.8 79.4 499.7C82.6 498.6 89.7 498.5 95 498.2C100.3 497.9 105.2 497.7 111 498C116.8 498.3 123.9 498.8 130 500C136.1 501.2 144.5 503.7 147.7 505C150.9 506.3 146.9 506.9 149 508C151.1 509.1 156.2 510.2 160 511.5C163.8 512.8 167 513.4 171.6 516C176.2 518.6 183.5 522.7 187.5 527C191.5 531.3 194.1 537.7 195.4 541.7C196.7 545.7 196.3 548.1 195.4 551C194.5 553.9 192.4 556.6 190 559C187.6 561.4 184.8 563.8 181 565.5C177.2 567.2 171.8 568.2 167 569.5C162.2 570.8 159.2 571.2 152.5 573C145.8 574.8 134.9 578.1 127 580C119.1 581.9 111.2 583.7 105 584.5C98.8 585.3 94.8 585.2 90 585C85.2 584.8 80 584.1 76 583C72 581.9 69.2 580.2 66 578.5C62.8 576.8 60.2 575.1 57 573C53.8 570.9 50.2 568.6 47 566C43.8 563.4 40.4 560.3 38 557.5C35.6 554.7 33.8 551.6 32.5 549C31.2 546.4 30.6 544.4 30 541.7C29.4 539 29.2 535.6 29 533C28.8 530.4 28.5 528.8 29 525.8C29.5 522.8 28 517.2 31.8 514.7Z" stroke-width="2.5"/>
<path d="M324 522C329 522.2 337.7 523.3 343 525C348.3 526.7 353.1 528.2 355.8 532C358.5 535.8 358.6 543.2 359 548C359.4 552.8 359 556.8 358.5 561C358 565.2 357.9 568.7 355.8 573.4C353.7 578.1 349.7 584.7 346 589C342.3 593.3 338.9 597 333.6 599C328.4 601 320.3 601 314.5 601C308.7 601 302.6 601 298.6 599C294.6 597 292.3 593.3 290.7 589C289.1 584.7 288.9 577.9 289 573.4C289.1 568.9 289.9 565.7 291 562C292.1 558.3 293.2 556 295.5 551C297.8 546 302.1 536.5 305 532C307.9 527.5 309.8 525.7 313 524C316.2 522.3 319 521.8 324 522Z" stroke-width="2.5"/>
<path d="M399.7 538.5C400.6 537.9 403 536.2 405 535C407 533.8 406 532.7 411.8 531.5C417.6 530.3 425.2 529.8 440 528C454.8 526.2 476.3 522.9 500.7 521C525.1 519.1 557.4 517.8 586.5 516.9C615.6 516 643.2 515.5 675.5 515.6C707.8 515.7 750.6 516.4 780 517.5C809.4 518.6 824.7 520.5 852 522C879.3 523.5 924.9 525.2 944 526.4C963.1 527.6 960.1 527.9 966.5 529C972.9 530.1 977.1 531.7 982.4 532.8C987.6 533.9 992.7 533.5 998 535.5C1003.3 537.5 1008.7 540.9 1014 544.8C1019.3 548.7 1026 554.8 1030 559C1034 563.2 1036.5 566.8 1038 570C1039.5 573.2 1039.8 575.6 1039 578C1038.2 580.4 1036.1 582.8 1033 584.6C1029.9 586.4 1025.8 586.9 1020.5 589C1015.2 591.1 1007.9 594.7 1001.5 597C995.1 599.3 989.8 600.9 982.4 602.7C975 604.5 962.8 606.2 957 607.8C951.2 609.4 953.8 611.1 947.5 612.5C941.2 613.9 929.1 615.1 919 616C908.9 616.9 900.3 617.7 887 618C873.7 618.3 855.3 618.3 839.4 618C823.5 617.7 808.5 616.7 791.8 616C775.1 615.3 754.7 614.7 739 614C723.3 613.3 715.2 612.7 697.7 612C680.2 611.3 657.8 610.5 634 610C610.2 609.5 575.9 609.8 554.7 609.3C533.5 608.8 520.3 607.8 507 606.8C493.7 605.8 485.6 605.1 475 603.6C464.4 602.1 452.5 600.1 443.5 598C434.5 595.9 426.3 594 421 591C415.7 588 413.9 584.8 411.8 579.8C409.7 574.8 409.1 567.1 408.6 560.7C408.1 554.4 408.3 546.3 408.8 541.7C409.3 537.1 411.1 534.5 411.5 533" stroke-width="2.5"/>
<path d="M974.5 622.7C977.9 622.6 988.4 622.3 995 622C1001.6 621.7 1008.2 621.5 1014 621C1019.8 620.5 1024.7 619.9 1030 619C1035.3 618.1 1040.7 616.7 1046 615.5C1051.3 614.3 1056.7 613 1062 611.6C1067.3 610.2 1072.7 608.6 1078 607C1083.3 605.4 1089.4 603.7 1093.6 602C1097.8 600.3 1099.6 598.5 1103 597C1106.4 595.5 1109.2 595.1 1114 593C1118.8 590.9 1125.8 586.9 1131.8 584.6C1137.8 582.3 1144 580.9 1150 579C1156 577.1 1163.7 575.8 1168 573.5C1172.3 571.2 1173 568.2 1176 565.5C1179 562.8 1182.8 559.8 1186 557C1189.2 554.2 1192.7 552.1 1195 549C1197.3 545.9 1198.5 541.3 1200 538.5C1201.5 535.7 1203.3 533.1 1204 532" stroke-width="2.5"/>
</g>
<rect x="9" y="81" width="234" height="29.6" fill="#e8e8ea"/>
<text x="10.5" y="101.2" font-size="13.5" fill="#23236e">S</text>
<text x="232" y="101.2" font-size="13.5" fill="#23236e">B</text>
<text x="26.8" y="103.8" font-size="11.5" fill="#e8102a" letter-spacing="0.3">1,16</text>
<text x="57.2" y="103.3" font-size="21.5" font-weight="bold" fill="#e8102a" letter-spacing="-0.2">58</text>
<text x="88.4" y="96" font-size="11.5" fill="#e8102a">7</text>
<text x="156" y="103.8" font-size="11.5" fill="#e8102a" letter-spacing="0.3">1,16</text>
<text x="186.4" y="103.3" font-size="21.5" font-weight="bold" fill="#e8102a" letter-spacing="-0.2">58</text>
<text x="217.6" y="96" font-size="11.5" fill="#e8102a">7</text>
<rect x="101.6" y="86.3" width="48.7" height="19" fill="#fff" stroke="#dcdcdc" stroke-width="0.6"/>
<text x="104" y="100.5" font-size="13" fill="#111">1</text>
<path d="M141.5 94.6h5l-2.5 3z" fill="#c8c8c8"/>
<rect x="-2" y="75.7" width="1523" height="370.6" fill="none" stroke="#c2cde0" stroke-width="2"/>
<rect x="-2" y="496.6" width="1523" height="136.8" fill="none" stroke="#c2cde0" stroke-width="2"/>
<rect x="0" y="489" width="1600" height="3.4" fill="#c3cedd"/>
<rect x="0" y="635.6" width="1600" height="3.3" fill="#c3cedd"/>
<rect x="-2" y="642.6" width="1523" height="10" fill="none" stroke="#c2cde0" stroke-width="2"/>
<rect x="1538" y="641" width="23.5" height="5" fill="#a2a2a2"/>
<path d="M0 62.6H1536M24.5 63V66M31.5 63V69M38.5 63V66M45.5 63V69M52.5 63V66M59.5 63V69M66.5 63V66M80.5 63V66M87.5 63V69M94.5 63V66M101.5 63V69M108.5 63V66M115.5 63V69M122.5 63V66M136.5 63V66M143.5 63V69M151.5 63V66M158.5 63V69M165.5 63V66M173.5 63V69M187.5 63V66M193.5 63V69M200.5 63V66M207.5 63V69M214.5 63V66M221.5 63V69M227.5 63V66M242.5 63V66M249.5 63V69M256.5 63V66M264.5 63V69M271.5 63V66M279.5 63V69M293.5 63V66M300.5 63V69M307.5 63V66M314.5 63V69M322.5 63V66M329.5 63V69M336.5 63V66M350.5 63V66M356.5 63V69M363.5 63V66M370.5 63V69M377.5 63V66M383.5 63V69M390.5 63V66M404.5 63V66M412.5 63V69M419.5 63V66M426.5 63V69M433.5 63V66M441.5 63V69M448.5 63V66M462.5 63V66M469.5 63V69M476.5 63V66M483.5 63V69M490.5 63V66M497.5 63V69M504.5 63V66M518.5 63V66M525.5 63V69M532.5 63V66M539.5 63V69M546.5 63V66M553.5 63V69M560.5 63V66M574.5 63V66M581.5 63V69M588.5 63V66M596.5 63V69M603.5 63V66M610.5 63V69M618.5 63V66M632.5 63V66M638.5 63V69M645.5 63V66M651.5 63V69M658.5 63V66M664.5 63V69M671.5 63V66M685.5 63V66M692.5 63V69M699.5 63V66M707.5 63V69M714.5 63V66M721.5 63V69M729.5 63V66M743.5 63V66M750.5 63V69M757.5 63V66M764.5 63V69M771.5 63V66M778.5 63V69M785.5 63V66M799.5 63V66M806.5 63V69M813.5 63V66M820.5 63V69M827.5 63V66M834.5 63V69M848.5 63V66M855.5 63V69M862.5 63V66M870.5 63V69M877.5 63V66M884.5 63V69M891.5 63V66M905.5 63V66M912.5 63V69M918.5 63V66M925.5 63V69M931.5 63V66M938.5 63V69M944.5 63V66M958.5 63V66M965.5 63V69M972.5 63V66M979.5 63V69M986.5 63V66M993.5 63V69M1000.5 63V66M1014.5 63V66M1021.5 63V69M1028.5 63V66M1035.5 63V69M1042.5 63V66M1049.5 63V69M1056.5 63V66M1070.5 63V66M1076.5 63V69M1083.5 63V66M1090.5 63V69M1096.5 63V66M1103.5 63V69M1110.5 63V66M1116.5 63V69M1130.5 63V66M1137.5 63V69M1144.5 63V66M1151.5 63V69M1159.5 63V66M1166.5 63V69M1173.5 63V66M1180.5 63V69M1194.5 63V66M1201.5 63V69M1207.5 63V66M1214.5 63V69M1221.5 63V66M1228.5 63V69M1234.5 63V66M1241.5 63V69M1248.5 63V66M1262.5 63V66M1269.5 63V69M1276.5 63V66M1283.5 63V69M1291.5 63V66M1298.5 63V69M1305.5 63V66M1312.5 63V69M1327.5 63V66M1334.5 63V69M1341.5 63V66M1348.5 63V69M1355.5 63V66M1362.5 63V69M1369.5 63V66M1376.5 63V69M1390.5 63V66M1397.5 63V69M1404.5 63V66M1411.5 63V69M1417.5 63V66M1424.5 63V69M1431.5 63V66M1438.5 63V69M1444.5 63V66M1458.5 63V66M1465.5 63V69M1473.5 63V66M1480.5 63V69M1487.5 63V66M1494.5 63V69M1501.5 63V66M1508.5 63V69M10.5 63V66M3.5 63V69M1523.5 63V66M1530.5 63V69" stroke="#333" stroke-width="1.1" fill="none"/>
<path d="M0.6 62V75.5" stroke="#222" stroke-width="1.6"/>
<path d="M1535.5 62.1V460" stroke="#2b2b2b" stroke-width="1.2"/>
<path d="M1255.5 63V75M1320.5 63V75M1384.5 63V75M1451.5 63V75M1516.5 63V75" stroke="#333" stroke-width="1.2" fill="none"/>
<path d="M12.9 63.2L22.1 63.2L17.5 73.4Z" fill="#f7a52c"/>
<path d="M17.5 63.4V72" stroke="#ea8f12" stroke-width="1"/>
<path d="M17.5 72V75.4" stroke="#4a3a20" stroke-width="1"/>
<path d="M69.1 63.2L78.3 63.2L73.7 73.4Z" fill="#f7a52c"/>
<path d="M73.7 63.4V72" stroke="#ea8f12" stroke-width="1"/>
<path d="M73.7 72V75.4" stroke="#4a3a20" stroke-width="1"/>
<path d="M124.8 63.2L134 63.2L129.4 73.4Z" fill="#f7a52c"/>
<path d="M129.4 63.4V72" stroke="#ea8f12" stroke-width="1"/>
<path d="M129.4 72V75.4" stroke="#4a3a20" stroke-width="1"/>
<path d="M175.8 63.2L185 63.2L180.4 73.4Z" fill="#f7a52c"/>
<path d="M180.4 63.4V72" stroke="#ea8f12" stroke-width="1"/>
<path d="M180.4 72V75.4" stroke="#4a3a20" stroke-width="1"/>
<path d="M230 63.2L239.2 63.2L234.6 73.4Z" fill="#f7a52c"/>
<path d="M234.6 63.4V72" stroke="#ea8f12" stroke-width="1"/>
<path d="M234.6 72V75.4" stroke="#4a3a20" stroke-width="1"/>
<path d="M281.9 63.2L291.1 63.2L286.5 73.4Z" fill="#f7a52c"/>
<path d="M286.5 63.4V72" stroke="#ea8f12" stroke-width="1"/>
<path d="M286.5 72V75.4" stroke="#4a3a20" stroke-width="1"/>
<path d="M338.8 63.2L348 63.2L343.4 73.4Z" fill="#f7a52c"/>
<path d="M343.4 63.4V72" stroke="#ea8f12" stroke-width="1"/>
<path d="M343.4 72V75.4" stroke="#4a3a20" stroke-width="1"/>
<path d="M392.9 63.2L402.1 63.2L397.5 73.4Z" fill="#f7a52c"/>
<path d="M397.5 63.4V72" stroke="#ea8f12" stroke-width="1"/>
<path d="M397.5 72V75.4" stroke="#4a3a20" stroke-width="1"/>
<path d="M451 63.2L460.2 63.2L455.6 73.4Z" fill="#f7a52c"/>
<path d="M455.6 63.4V72" stroke="#ea8f12" stroke-width="1"/>
<path d="M455.6 72V75.4" stroke="#4a3a20" stroke-width="1"/>
<path d="M506.9 63.2L516.1 63.2L511.5 73.4Z" fill="#f7a52c"/>
<path d="M511.5 63.4V72" stroke="#ea8f12" stroke-width="1"/>
<path d="M511.5 72V75.4" stroke="#4a3a20" stroke-width="1"/>
<path d="M562.4 63.2L571.6 63.2L567 73.4Z" fill="#f7a52c"/>
<path d="M567 63.4V72" stroke="#ea8f12" stroke-width="1"/>
<path d="M567 72V75.4" stroke="#4a3a20" stroke-width="1"/>
<path d="M621 63.2L630.2 63.2L625.6 73.4Z" fill="#f7a52c"/>
<path d="M625.6 63.4V72" stroke="#ea8f12" stroke-width="1"/>
<path d="M625.6 72V75.4" stroke="#4a3a20" stroke-width="1"/>
<path d="M673.4 63.2L682.6 63.2L678 73.4Z" fill="#f7a52c"/>
<path d="M678 63.4V72" stroke="#ea8f12" stroke-width="1"/>
<path d="M678 72V75.4" stroke="#4a3a20" stroke-width="1"/>
<path d="M731.9 63.2L741.1 63.2L736.5 73.4Z" fill="#f7a52c"/>
<path d="M736.5 63.4V72" stroke="#ea8f12" stroke-width="1"/>
<path d="M736.5 72V75.4" stroke="#4a3a20" stroke-width="1"/>
<path d="M787.4 63.2L796.6 63.2L792 73.4Z" fill="#f7a52c"/>
<path d="M792 63.4V72" stroke="#ea8f12" stroke-width="1"/>
<path d="M792 72V75.4" stroke="#4a3a20" stroke-width="1"/>
<path d="M836.7 63.2L845.9 63.2L841.3 73.4Z" fill="#f7a52c"/>
<path d="M841.3 63.4V72" stroke="#ea8f12" stroke-width="1"/>
<path d="M841.3 72V75.4" stroke="#4a3a20" stroke-width="1"/>
<path d="M894.4 63.2L903.6 63.2L899 73.4Z" fill="#f7a52c"/>
<path d="M899 63.4V72" stroke="#ea8f12" stroke-width="1"/>
<path d="M899 72V75.4" stroke="#4a3a20" stroke-width="1"/>
<path d="M946.9 63.2L956.1 63.2L951.5 73.4Z" fill="#f7a52c"/>
<path d="M951.5 63.4V72" stroke="#ea8f12" stroke-width="1"/>
<path d="M951.5 72V75.4" stroke="#4a3a20" stroke-width="1"/>
<path d="M1002.9 63.2L1012.1 63.2L1007.5 73.4Z" fill="#f7a52c"/>
<path d="M1007.5 63.4V72" stroke="#ea8f12" stroke-width="1"/>
<path d="M1007.5 72V75.4" stroke="#4a3a20" stroke-width="1"/>
<path d="M1058.9 63.2L1068.1 63.2L1063.5 73.4Z" fill="#f7a52c"/>
<path d="M1063.5 63.4V72" stroke="#ea8f12" stroke-width="1"/>
<path d="M1063.5 72V75.4" stroke="#4a3a20" stroke-width="1"/>
<path d="M1118.9 63.2L1128.1 63.2L1123.5 73.4Z" fill="#f7a52c"/>
<path d="M1123.5 63.4V72" stroke="#ea8f12" stroke-width="1"/>
<path d="M1123.5 72V75.4" stroke="#4a3a20" stroke-width="1"/>
<path d="M1182.9 63.2L1192.1 63.2L1187.5 73.4Z" fill="#f7a52c"/>
<path d="M1187.5 63.4V72" stroke="#ea8f12" stroke-width="1"/>
<path d="M1187.5 72V75.4" stroke="#4a3a20" stroke-width="1"/>
<path d="M17.5 76.6V78.4M73.7 76.6V78.4M129.4 76.6V78.4M180.4 76.6V78.4M234.6 76.6V78.4M286.5 76.6V78.4M343.4 76.6V78.4M397.5 76.6V78.4M455.6 76.6V78.4M511.5 76.6V78.4M567 76.6V78.4M625.6 76.6V78.4M678 76.6V78.4M736.5 76.6V78.4M792 76.6V78.4M841.3 76.6V78.4M899 76.6V78.4M951.5 76.6V78.4M1007.5 76.6V78.4M1063.5 76.6V78.4M1123.5 76.6V78.4M1187.5 76.6V78.4" stroke="#b4c4de" stroke-width="1" fill="none"/>
<g font-size="13" fill="#23236e" text-anchor="middle" letter-spacing="0.9">
<text x="16.5" y="55.6">Oct</text>
<text x="72.7" y="55.6">Nov</text>
<text x="128.4" y="55.6">Dec</text>
<text x="179.4" y="55.6">2017</text>
<text x="233.6" y="55.6">Fev</text>
<text x="285.5" y="55.6">Mars</text>
<text x="342.4" y="55.6">Avr</text>
<text x="396.5" y="55.6">Mai</text>
<text x="454.6" y="55.6">Juin</text>
<text x="510.5" y="55.6">Juil</text>
<text x="566" y="55.6">Août</text>
<text x="624.6" y="55.6">Sep</text>
<text x="677" y="55.6">Oct</text>
<text x="735.5" y="55.6">Nov</text>
<text x="791" y="55.6">Dec</text>
<text x="840.3" y="55.6">2018</text>
<text x="898" y="55.6">Fev</text>
<text x="950.5" y="55.6">Mars</text>
<text x="1006.5" y="55.6">Avr</text>
<text x="1062.5" y="55.6">Mai</text>
<text x="1122.5" y="55.6">Juin</text>
<text x="1186.5" y="55.6">Juil</text>
</g>
<path d="M0 459H1536M5.4 456V459M16.4 453V459M27.4 456V459M38.4 453V459M49.4 456V459M71.4 456V459M82.4 453V459M93.4 456V459M104.4 453V459M115.4 456V459M126.4 453V459M137.4 456V459M159.4 456V459M170.4 453V459M181.4 456V459M192.4 453V459M203.4 456V459M214.4 453V459M225.4 456V459M247.4 456V459M258.4 453V459M269.4 456V459M280.4 453V459M291.4 456V459M302.4 453V459M313.4 456V459M335.4 456V459M346.4 453V459M357.4 456V459M368.4 453V459M379.4 456V459M390.4 453V459M401.4 456V459M423.4 456V459M434.4 453V459M445.4 456V459M456.4 453V459M467.4 456V459M478.4 453V459M489.4 456V459M511.4 456V459M522.4 453V459M533.4 456V459M544.4 453V459M555.4 456V459M566.4 453V459M577.4 456V459M599.4 456V459M610.4 453V459M621.4 456V459M632.4 453V459M643.4 456V459M654.4 453V459M665.4 456V459M687.4 456V459M698.4 453V459M709.4 456V459M720.4 453V459M731.4 456V459M742.4 453V459M753.4 456V459M775.4 456V459M786.4 453V459M797.4 456V459M808.4 453V459M819.4 456V459M830.4 453V459M841.4 456V459M863.4 456V459M874.4 453V459M885.4 456V459M896.4 453V459M907.4 456V459M918.4 453V459M929.4 456V459M951.4 456V459M962.4 453V459M973.4 456V459M984.4 453V459M995.4 456V459M1006.4 453V459M1017.4 456V459M1039.4 456V459M1050.4 453V459M1061.4 456V459M1072.4 453V459M1083.4 456V459M1094.4 453V459M1105.4 456V459M1127.4 456V459M1138.4 453V459M1149.4 456V459M1160.4 453V459M1171.4 456V459M1182.4 453V459M1193.4 456V459M1215.4 456V459M1226.4 453V459M1237.4 456V459M1248.4 453V459M1259.4 456V459M1270.4 453V459M1281.4 456V459M1303.4 456V459M1314.4 453V459M1325.4 456V459M1336.4 453V459M1347.4 456V459M1358.4 453V459M1369.4 456V459M1391.4 456V459M1402.4 453V459M1413.4 456V459M1424.4 453V459M1435.4 456V459M1446.4 453V459M1457.4 456V459M1479.4 456V459M1490.4 453V459M1501.4 456V459M1512.4 453V459M1523.4 456V459" stroke="#2b2b2b" stroke-width="1.2" fill="none"/>
<path d="M0.6 447V459M60.4 447V459M148.4 447V459M236.4 447V459M324.4 447V459M412.4 447V459M500.4 447V459M588.4 447V459M676.4 447V459M764.4 447V459M852.4 447V459M940.4 447V459M1028.4 447V459M1116.4 447V459M1204.4 447V459M1292.4 447V459M1380.4 447V459M1468.4 447V459" stroke="#222" stroke-width="1.5" fill="none"/>
<g font-size="12.5" fill="#23236e" text-anchor="middle" letter-spacing="1.45">
<text x="147.9" y="480.8">12/12</text>
<text x="235.9" y="480.8">02/02/2017</text>
<text x="323.9" y="480.8">22/03</text>
<text x="499.9" y="480.8">26/06</text>
<text x="587.9" y="480.8">13/08</text>
<text x="675.9" y="480.8">29/09</text>
<text x="763.9" y="480.8">16/11</text>
<text x="851.9" y="480.8">07/01/2018</text>
<text x="939.9" y="480.8">23/02</text>
<text x="1027.9" y="480.8">12/04</text>
<text x="1115.9" y="480.8">29/05</text>
<text x="1203.9" y="480.8">09/07</text>
<text x="1291.9" y="480.8">19/08</text>
<text x="1379.9" y="480.8">29/09</text>
<text x="1467.9" y="480.8">09/11</text>
</g>
<text x="1" y="480.8" font-size="12.5" fill="#23236e" letter-spacing="1.45">22/09/2016</text>
<rect x="377" y="463.8" width="80" height="20" fill="#f79a14"/>
<text x="417" y="478.6" font-size="12.5" font-weight="bold" fill="#111" text-anchor="middle" letter-spacing="0.55">11/05/2017</text>
<path d="M1531.6 443.1H1536M1531.6 437.1H1536M1531.6 431H1536M1521 425H1536M1531.6 419H1536M1531.6 412.9H1536M1531.6 406.9H1536M1531.6 400.9H1536M1529 394.9H1536M1531.6 388.8H1536M1531.6 382.8H1536M1531.6 376.8H1536M1531.6 370.7H1536M1521 364.7H1536M1531.6 358.7H1536M1531.6 352.6H1536M1531.6 346.6H1536M1531.6 340.6H1536M1529 334.6H1536M1531.6 328.5H1536M1531.6 322.5H1536M1531.6 316.5H1536M1531.6 310.4H1536M1521 304.4H1536M1531.6 298.4H1536M1531.6 292.3H1536M1531.6 286.3H1536M1531.6 280.3H1536M1529 274.2H1536M1531.6 268.2H1536M1531.6 262.2H1536M1531.6 256.2H1536M1531.6 250.1H1536M1521 244.1H1536M1531.6 238.1H1536M1531.6 232H1536M1531.6 226H1536M1531.6 220H1536M1529 213.9H1536M1531.6 207.9H1536M1531.6 201.9H1536M1531.6 195.9H1536M1531.6 189.8H1536M1521 183.8H1536M1531.6 177.8H1536M1531.6 171.7H1536M1531.6 165.7H1536M1531.6 159.7H1536M1529 153.6H1536M1531.6 147.6H1536M1531.6 141.6H1536M1531.6 135.6H1536M1531.6 129.5H1536M1521 123.5H1536M1531.6 117.5H1536M1531.6 111.4H1536M1531.6 105.4H1536M1531.6 99.4H1536M1529 93.3H1536M1531.6 87.3H1536M1531.6 81.3H1536" stroke="#2b2b2b" stroke-width="1.1" fill="none"/>
<g font-size="12.5" fill="#23236e" letter-spacing="0.95">
<text x="1539.5" y="128.7">1,3000</text>
<text x="1539.5" y="188.7">1,2500</text>
<text x="1539.5" y="249">1,2000</text>
<text x="1539.5" y="309.5">1,1500</text>
<text x="1539.5" y="369.6">1,1000</text>
<text x="1539.5" y="430.2">1,0500</text>
</g>
<rect x="1535.5" y="88" width="55.2" height="20" fill="#f79a14"/>
<text x="1538" y="103" font-size="12.5" fill="#111" letter-spacing="0.75">1,32036</text>
<rect x="1535.5" y="274.8" width="55.2" height="20.2" fill="#5fc2fa"/>
<text x="1538" y="289.8" font-size="12.5" fill="#111" letter-spacing="0.75">1,16587</text>
<path d="M1535.5 498V632M1529 505.4H1536M1531.6 514.3H1536M1531.6 523.1H1536M1531.6 532H1536M1531.6 540.8H1536M1529 549.7H1536M1531.6 558.6H1536M1531.6 567.4H1536M1531.6 576.3H1536M1531.6 585.1H1536M1529 594H1536M1531.6 602.9H1536M1531.6 611.7H1536M1531.6 620.6H1536M1531.6 629.4H1536" stroke="#2b2b2b" stroke-width="1.1" fill="none"/>
<path d="M1521 549.7H1536" stroke="#2b2b2b" stroke-width="1.1"/>
<rect x="1538" y="524" width="8.8" height="16" fill="#9a9a9a"/>
<text x="1539" y="537" font-size="12.5" fill="#111">1</text>
<text x="1538.5" y="555.4" font-size="12.5" fill="#23236e" letter-spacing="0.95">0,0000</text>
<rect x="1538" y="560.8" width="15" height="15" fill="#9a9a9a"/>
<text x="1539" y="573" font-size="12.5" fill="#111" letter-spacing="0.6">-1</text>
<defs><linearGradient id="gs" x1="0" y1="0" x2="0" y2="1"><stop offset="0" stop-color="#e6e6e6"/><stop offset="1" stop-color="#c4c4c4"/></linearGradient></defs>
<rect x="1146" y="541.7" width="32.8" height="15" fill="url(#gs)"/>
<text x="1162.4" y="554" font-size="12.5" fill="#111" text-anchor="middle" letter-spacing="0.6">SSI</text>
</svg>
</body></html>
